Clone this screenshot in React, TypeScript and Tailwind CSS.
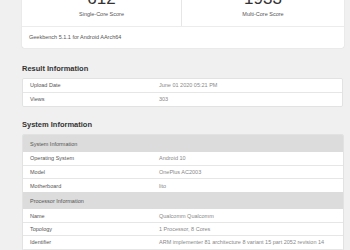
import React from "react";

const font = { fontFamily: '"Liberation Sans", Arial, sans-serif' };

function Row({ label, value, last }: { label: string; value: string; last?: boolean }) {
  return (
    <div className={`flex h-[13.4px] items-center bg-white text-[5.5px] ${last ? "" : "border-b border-[#e6e6e6]"}`}>
      <div className="w-[136px] pl-[7px] text-[#555]">{label}</div>
      <div className="text-[#888]">{value}</div>
    </div>
  );
}

function Header({ title }: { title: string }) {
  return (
    <div className="flex h-[17px] items-center bg-[#dcdcdc] pl-[7px] text-[5.5px] text-[#555]">{title}</div>
  );
}

export default function App() {
  return (
    <div className="h-[250px] w-[350px] overflow-hidden bg-[#f0f0f0]" style={font}>
      <div className="ml-[22px] w-[322px]">
        <div className="-mt-[10px] rounded-[2px] bg-white shadow-[0_0_1px_rgba(0,0,0,0.25)]">
          <div className="flex h-[37px] border-b border-[#ececec]">
            <div className="flex flex-1 flex-col items-center border-r border-[#e6e6e6]">
              <div className="text-[17px] leading-[18px] font-light text-[#333]">612</div>
              <div className="mt-[2px] text-[5.5px] text-[#555]">Single-Core Score</div>
            </div>
            <div className="flex w-[162px] flex-col items-center">
              <div className="text-[17px] leading-[18px] font-light text-[#333]">1933</div>
              <div className="mt-[2px] text-[5.5px] text-[#555]">Multi-Core Score</div>
            </div>
          </div>
          <div className="flex h-[21px] items-center pl-[7px] text-[5.5px] text-[#555]">
            Geekbench 5.1.1 for Android AArch64
          </div>
        </div>

        <div className="mt-[15px] text-[7.5px] font-bold text-[#333]">Result Information</div>
        <div className="mt-[4px] w-[321px] overflow-hidden rounded-[2px] border border-[#e2e2e2]">
          <Row label="Upload Date" value="June 01 2020 05:21 PM" />
          <Row label="Views" value="303" last />
        </div>

        <div className="mt-[12px] text-[7.5px] font-bold text-[#333]">System Information</div>
        <div className="mt-[4px] overflow-hidden rounded-[2px] border border-[#e2e2e2]">
          <Header title="System Information" />
          <Row label="Operating System" value="Android 10" />
          <Row label="Model" value="OnePlus AC2003" />
          <Row label="Motherboard" value="lito" last />
          <Header title="Processor Information" />
          <Row label="Name" value="Qualcomm Qualcomm" />
          <Row label="Topology" value="1 Processor, 8 Cores" />
          <Row label="Identifier" value="ARM implementer 81 architecture 8 variant 15 part 2052 revision 14" />
        </div>
      </div>
    </div>
  );
}
